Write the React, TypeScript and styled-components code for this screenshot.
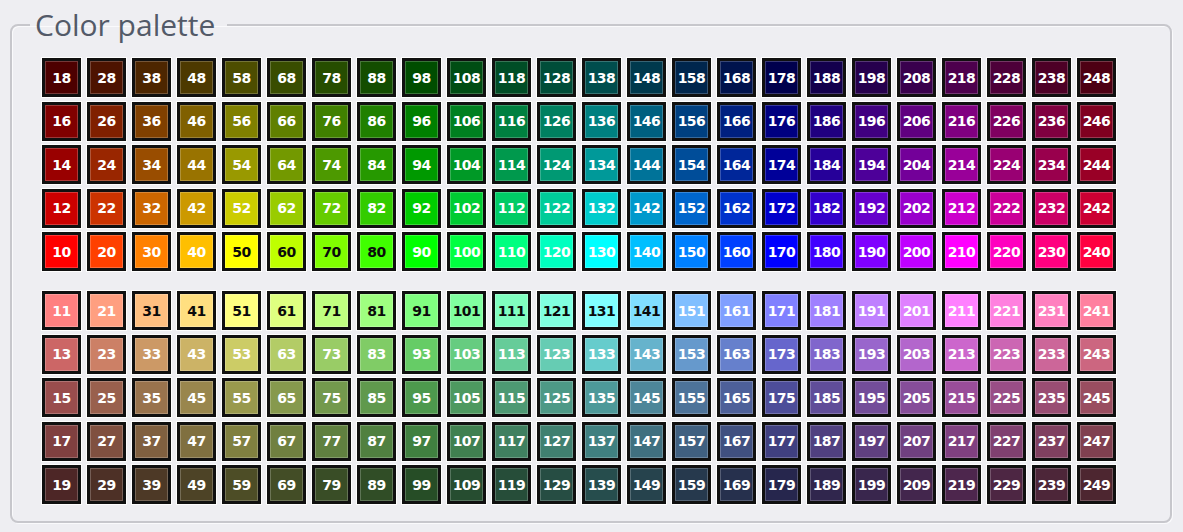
import React from "react";
import styled, { createGlobalStyle } from "styled-components";

const GlobalStyle = createGlobalStyle`
  html, body {
    margin: 0;
    padding: 0;
    background: #eeeef2;
  }
  body {
    width: 1183px;
    height: 532px;
    overflow: hidden;
    font-family: "DejaVu Sans", Verdana, sans-serif;
  }
`;

// shade factor for each pair of levels (x0/x1, x2/x3 ... x8/x9)
const SHADES = [1, 0.8, 0.6, 0.5, 0.3];
const TOP_LEVELS = [8, 6, 4, 2, 0];
const BOTTOM_LEVELS = [1, 3, 5, 7, 9];
const DARK_TEXT = [50, 60, 70, 80, 31, 41, 51, 61, 71, 81, 91, 101, 111, 121, 131, 141];

const hueRgb = (i: number): number[] => {
    const h = (i * 15) / 60;
    const f = (n: number) => {
        const k = (n + h) % 6;
        return 255 * (1 - Math.max(0, Math.min(k, 4 - k, 1)));
    };
    return [f(5), f(3), f(1)];
};

const aciColor = (code: number) => {
    const level = code % 10;
    const base = hueRgb(Math.floor(code / 10) - 1);
    const shade = SHADES[Math.floor(level / 2)];
    const rgb = base.map((c) => Math.round((level % 2 ? (c + 255) / 2 : c) * shade));
    return `rgb(${rgb.join(",")})`;
};

const Group = styled.fieldset`
    margin: 10px 11px 0 10px;
    padding: 18px 0 17px 30px;
    border: 2px solid #c7c7cc;
    border-radius: 8px;
    box-shadow: inset 1px 1px 0 #fafafc, 1px 1px 0 #fafafc;
    min-width: 0;
`;

const Title = styled.legend`
    margin-left: -12px;
    padding: 0 12px 0 5px;
    font-family: "Open Sans", "Noto Sans", sans-serif;
    font-size: 30px;
    line-height: 30px;
    color: #535a68;
`;

const Grid = styled.div<{ $gap?: number }>`
    display: grid;
    grid-template-columns: repeat(24, 39px);
    grid-auto-rows: 39px;
    column-gap: 6px;
    row-gap: 4.5px;
    margin-top: ${(p) => p.$gap ?? 0}px;
`;

const Swatch = styled.div<{ $dark: boolean }>`
    box-sizing: border-box;
    display: flex;
    align-items: center;
    justify-content: center;
    border: 3px solid #101010;
    box-shadow: 0 0 0 1px rgba(255, 255, 255, 0.9), inset 0 0 0 1px rgba(255, 255, 255, 0.22);
    color: ${(p) => (p.$dark ? "#0a0a0a" : "#ffffff")};
    font-size: 14px;
    font-weight: bold;
    letter-spacing: -0.5px;
`;

const Palette = ({ levels, gap }: { levels: number[]; gap?: number }) => (
    <Grid $gap={gap}>
        {levels.map((lvl) =>
            Array.from({ length: 24 }, (_, i) => {
                const code = (i + 1) * 10 + lvl;
                return (
                    <Swatch key={code} $dark={DARK_TEXT.includes(code)} style={{ background: aciColor(code) }}>
                        {code}
                    </Swatch>
                );
            })
        )}
    </Grid>
);

export default function App() {
    return (
        <>
            <GlobalStyle />
            <Group>
                <Title>Color palette</Title>
                <Palette levels={TOP_LEVELS} />
                <Palette levels={BOTTOM_LEVELS} gap={20} />
            </Group>
        </>
    );
}
